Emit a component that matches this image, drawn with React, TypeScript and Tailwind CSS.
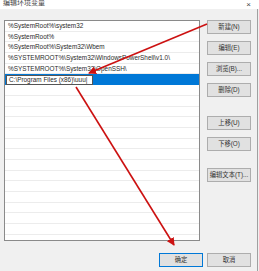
import React from "react";

const rows = [
  "%SystemRoot%\\system32",
  "%SystemRoot%",
  "%SystemRoot%\\System32\\Wbem",
  "%SYSTEMROOT%\\System32\\WindowsPowerShell\\v1.0\\",
  "%SYSTEMROOT%\\System32\\OpenSSH\\",
];

const font = { fontFamily: '"Liberation Sans", "Noto Sans CJK SC", sans-serif' };

function Btn({ label, primary }: { label: string; primary?: boolean }) {
  return (
    <div
      className={`w-[44px] h-[14px] flex items-center justify-center text-[6.3px] text-[#333] bg-[#e1e1e1] border ${
        primary ? "border-[#0078d7]" : "border-[#adadad]"
      }`}
    >
      {label}
    </div>
  );
}

export default function App() {
  const empty = Array.from({ length: 15 });
  return (
    <div className="relative w-[259px] h-[271px] bg-[#f0f0f0] overflow-hidden" style={font}>
      <div className="h-[9px] bg-white flex items-end justify-between px-[3px]">
        <span className="text-[7px] leading-[7px] text-[#444] -translate-y-[3px]">编辑环境变量</span>
        <span className="text-[8px] leading-[8px] text-[#444] mr-[5px]">×</span>
      </div>
      <div className="flex pl-[4px] pt-[11px]">
        <div className="w-[196px] h-[221px] bg-white border border-[#8a8a8a] overflow-hidden">
          {rows.map((r) => (
            <div key={r} className="h-[10.7px] border-b border-[#ececec] flex items-center pl-[3px] text-[6.4px] text-[#2a2a2a] whitespace-nowrap">
              {r}
            </div>
          ))}
          <div className="h-[10.7px] bg-[#0078d7] flex items-stretch">
            <div className="w-[87px] bg-white border border-[#555] flex items-center pl-[2px] text-[6.4px] text-[#2a2a2a] whitespace-nowrap my-[0.5px] ml-[1px]">
              C:\Program Files (x86)\uuu|
            </div>
          </div>
          {empty.map((_, i) => (
            <div key={i} className="h-[10.7px] border-b border-[#ececec]" />
          ))}
        </div>
        <div className="ml-[7px] flex flex-col">
          <div className="flex flex-col gap-[7px]">
            <Btn label="新建(N)" />
            <Btn label="编辑(E)" />
            <Btn label="浏览(B)..." />
            <Btn label="删除(D)" />
          </div>
          <div className="flex flex-col gap-[7px] mt-[19px]">
            <Btn label="上移(U)" />
            <Btn label="下移(O)" />
          </div>
          <div className="mt-[17px]">
            <Btn label="编辑文本(T)..." />
          </div>
        </div>
      </div>
      <div className="flex justify-end gap-[4px] pr-[8px] mt-[12px]">
        <Btn label="确定" primary />
        <Btn label="取消" />
      </div>
      <div className="absolute right-[1px] top-[9px] bottom-0 w-[1px] bg-[#a0a0a0]" />
      <svg className="absolute inset-0 pointer-events-none" width="259" height="271">
        <defs>
          <marker id="ah" markerWidth="8" markerHeight="8" refX="7" refY="4" orient="auto" markerUnits="userSpaceOnUse">
            <path d="M0,0 L8,4 L0,8 z" fill="#cc1111" />
          </marker>
        </defs>
        <line x1="207" y1="24" x2="89" y2="73" stroke="#cc1111" strokeWidth="1.6" markerEnd="url(#ah)" />
        <line x1="76" y1="87" x2="174" y2="245" stroke="#cc1111" strokeWidth="1.6" markerEnd="url(#ah)" />
      </svg>
    </div>
  );
}
